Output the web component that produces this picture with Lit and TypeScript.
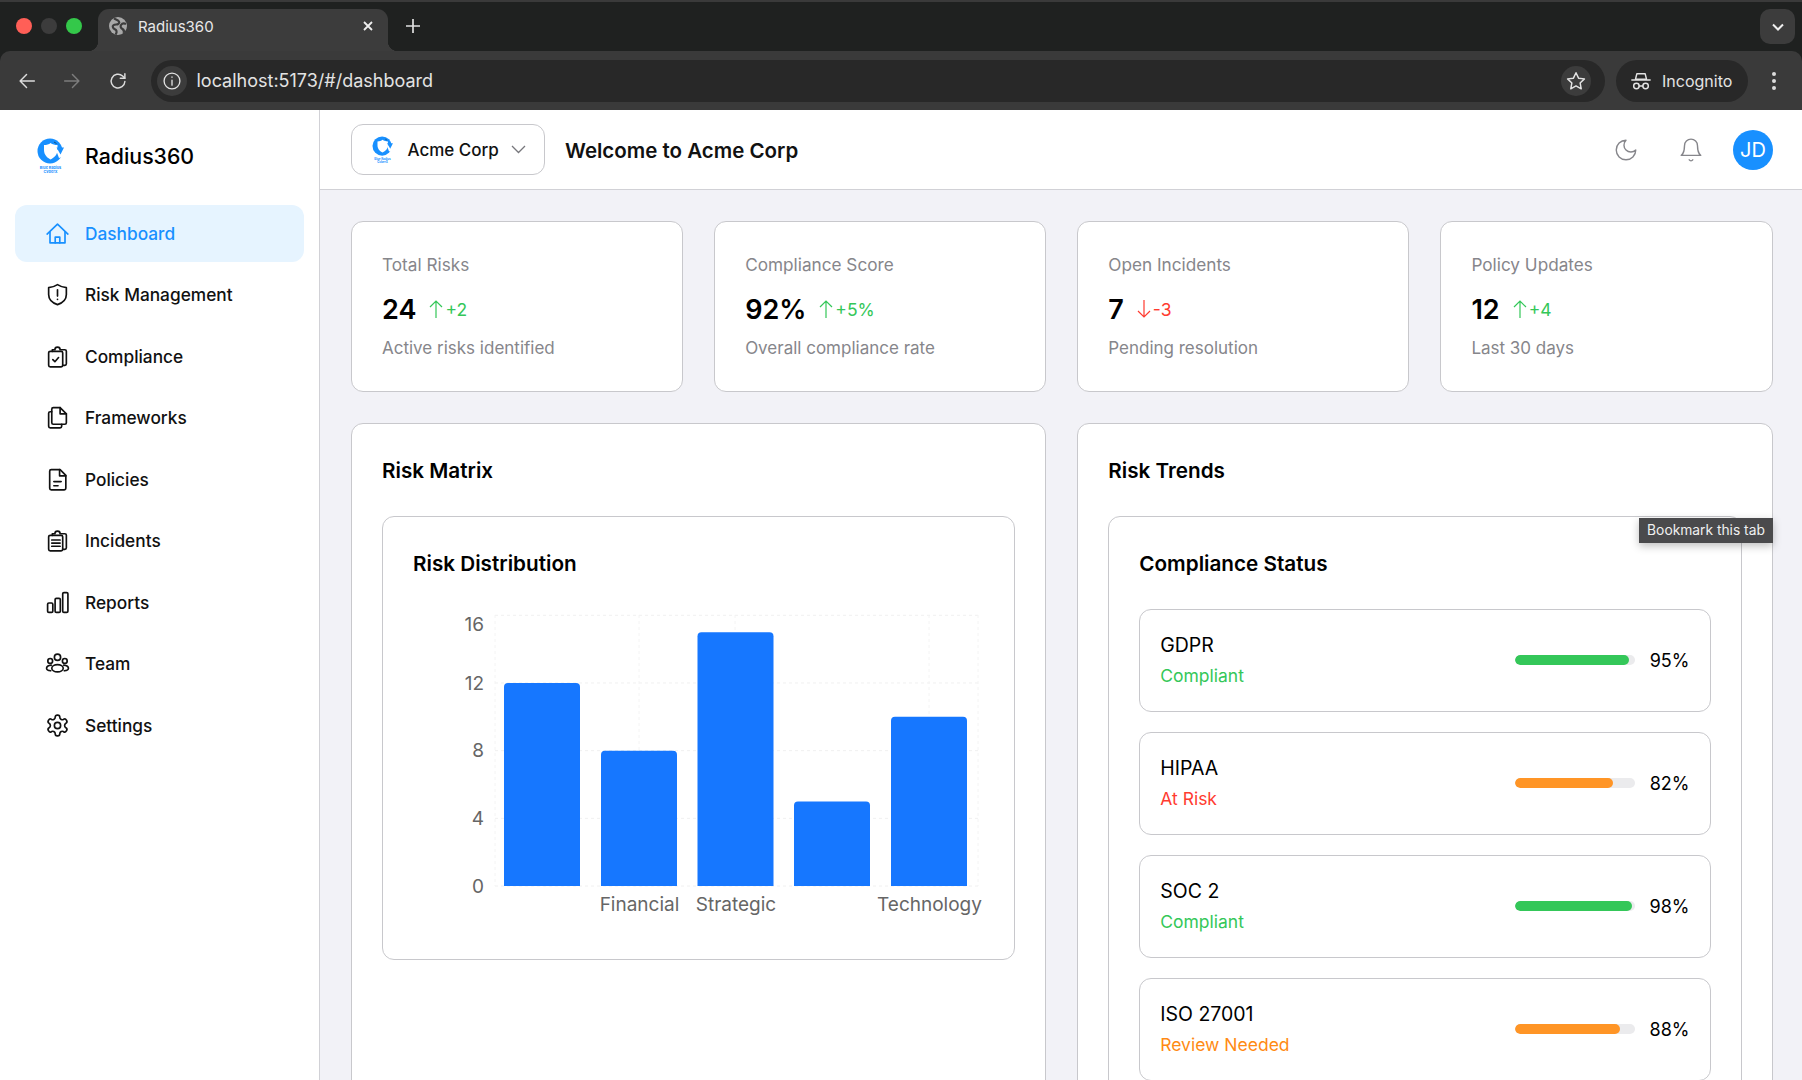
import { LitElement, html, svg, css } from 'lit';
import { customElement } from 'lit/decorators.js';

const ic = (body: unknown, size = 25, sw = 1.6) => html`<svg class="ic" width=${size} height=${size} viewBox="0 0 24 24" fill="none" stroke="currentColor" stroke-width=${sw} stroke-linecap="round" stroke-linejoin="round">${body}</svg>`;

const navItems = [
  { label: 'Dashboard', active: true, icon: svg`<path d="M2 12.500 12 3l10 9.500"/><path d="M4.800 10.500V21h14.400V10.500"/><path d="M9.800 21v-5.500h4.400V21"/>` },
  { label: 'Risk Management', icon: svg`<path d="M12 2.500c2.600 1.700 5.200 2.600 8.500 2.900V12c0 4.700-3.300 8-8.500 9.700C6.800 20 3.500 16.700 3.500 12V5.400C6.800 5.100 9.400 4.200 12 2.500z"/><path d="M12 7.500v6"/><path d="M12 16.600v.2"/>` },
  { label: 'Compliance', icon: svg`<rect x="3.500" y="7" width="13.500" height="15" rx="1.500"/><path d="M7 7V5.500h2.500a2.500 2.500 0 0 1 5 0H19a1.500 1.500 0 0 1 1.500 1.500v12a1.500 1.500 0 0 1-1.500 1.500h-2"/><path d="m7.500 15 2 2 3.500-4"/>` },
  { label: 'Frameworks', icon: svg`<path d="M8 2.500h6.500l6 6V17a1.500 1.500 0 0 1-1.500 1.500H8A1.500 1.500 0 0 1 6.500 17V4A1.500 1.500 0 0 1 8 2.500z"/><path d="M14.500 2.500v6h6"/><path d="M6.500 6.500H5A1.500 1.500 0 0 0 3.500 8v12.500A1.500 1.500 0 0 0 5 22h9.500a1.500 1.500 0 0 0 1.500-1.500v-2"/>` },
  { label: 'Policies', icon: svg`<path d="M6 2.500h8.500l5.500 5.500v12.500a1.500 1.500 0 0 1-1.500 1.500H6a1.500 1.500 0 0 1-1.500-1.500V4A1.500 1.500 0 0 1 6 2.500z"/><path d="M14 2.500V8.500h6"/><path d="M8.500 14h7"/><path d="M8.500 18h4"/>` },
  { label: 'Incidents', icon: svg`<rect x="3.500" y="7" width="13.500" height="15" rx="1.500"/><path d="M7 7V5.500h2.500a2.500 2.500 0 0 1 5 0H19a1.500 1.500 0 0 1 1.500 1.500v12a1.500 1.500 0 0 1-1.500 1.500h-2"/><path d="M6.500 11.500h8M6.500 14.500h8M6.500 17.500h8"/>` },
  { label: 'Reports', icon: svg`<rect x="2.500" y="12.500" width="5" height="9" rx="1.200"/><rect x="9.700" y="8" width="5" height="13.500" rx="1.200"/><rect x="17" y="2.500" width="5" height="19" rx="1.200"/>` },
  { label: 'Team', icon: svg`<circle cx="12" cy="6" r="3"/><circle cx="5" cy="9.500" r="2.300"/><circle cx="19" cy="9.500" r="2.300"/><ellipse cx="12" cy="16.500" rx="5.500" ry="3.500"/><path d="M6 13.500c-2.500.2-4.500 1.400-4.500 3 0 1.300 1.700 2.300 4 2.500"/><path d="M18 13.500c2.500.2 4.500 1.400 4.500 3 0 1.300-1.700 2.300-4 2.500"/>` },
  { label: 'Settings', icon: svg`<path d="M12.220 2h-.44a2 2 0 0 0-2 2v.18a2 2 0 0 1-1 1.730l-.43.25a2 2 0 0 1-2 0l-.15-.08a2 2 0 0 0-2.730.73l-.22.38a2 2 0 0 0 .73 2.730l.15.1a2 2 0 0 1 1 1.720v.51a2 2 0 0 1-1 1.740l-.15.09a2 2 0 0 0-.73 2.730l.22.38a2 2 0 0 0 2.730.73l.15-.08a2 2 0 0 1 2 0l.43.25a2 2 0 0 1 1 1.730V20a2 2 0 0 0 2 2h.44a2 2 0 0 0 2-2v-.18a2 2 0 0 1 1-1.730l.43-.25a2 2 0 0 1 2 0l.15.08a2 2 0 0 0 2.730-.73l.22-.39a2 2 0 0 0-.73-2.730l-.15-.08a2 2 0 0 1-1-1.740v-.5a2 2 0 0 1 1-1.740l.15-.09a2 2 0 0 0 .73-2.730l-.22-.38a2 2 0 0 0-2.730-.73l-.15.08a2 2 0 0 1-2 0l-.43-.25a2 2 0 0 1-1-1.730V4a2 2 0 0 0-2-2z"/><circle cx="12" cy="12" r="3"/>` },
];

const stats = [
  { label: 'Total Risks', value: '24', delta: '+2', up: true, sub: 'Active risks identified' },
  { label: 'Compliance Score', value: '92%', delta: '+5%', up: true, sub: 'Overall compliance rate' },
  { label: 'Open Incidents', value: '7', delta: '-3', up: false, sub: 'Pending resolution' },
  { label: 'Policy Updates', value: '12', delta: '+4', up: true, sub: 'Last 30 days' },
];

const frameworks = [
  { name: 'GDPR', status: 'Compliant', cls: 'green', pct: 95 },
  { name: 'HIPAA', status: 'At Risk', cls: 'red', pct: 82 },
  { name: 'SOC 2', status: 'Compliant', cls: 'green', pct: 98 },
  { name: 'ISO 27001', status: 'Review Needed', cls: 'orange', pct: 88 },
];

// chart geometry, local to the svg
const bars = [
  { x: 91, v: 12 }, { x: 188, v: 8 }, { x: 284.5, v: 15 }, { x: 381, v: 5 }, { x: 478, v: 10 },
];
const baseY = 277;
const perUnit = 16.92;

const logo = (w: number, h: number) => html`<svg class="logo" width=${w} height=${h} viewBox="0 0 54 70">
  <circle cx="26" cy="26" r="25" fill="#1890ff"/>
  <path d="M27 10c4 3 9 4 14 4v10c0 9-6 15-14 19-6-3-13-9-13-19V14c5 0 10-1 13-4z" fill="#fff"/>
  <path d="M38 24 54 24V37L44 40z" fill="#fff"/>
  <path d="M39 19h15l-7 14z" fill="#1890ff"/>
  <path d="M34 8l5 3" stroke="#16507c" stroke-width="2"/>
  <text x="27" y="61" text-anchor="middle" font-size="7.500" font-weight="700" fill="#1890ff">Blue Radius</text>
  <text x="27" y="69" text-anchor="middle" font-size="7.500" font-weight="700" fill="#1890ff">CyberX</text>
</svg>`;

@customElement('app-root')
export class AppRoot extends LitElement {
  static styles = css`
    :host {
      display: flex;
      flex-direction: column;
      position: relative;
      height: 1080px;
      overflow: hidden;
      font-family: Inter, "Liberation Sans", sans-serif;
      color: #000;
      background: #f2f2f7;
    }

    /* browser frame */
    .strip {
      flex: none;
      display: flex;
      background: #1f2120;
      border-top: 2px solid #3a3a3a;
      padding-top: 7px;
      height: 42px;
      color: #e8e8e8;
    }
    .lights { width: 98px; display: flex; align-items: center; padding: 0 0 8px 16px; gap: 9px; box-sizing: border-box; }
    .lights i { width: 16px; height: 16px; border-radius: 50%; background: #3c3c3c; }
    .lights i.r { background: #ff5f57; }
    .lights i.g { background: #34c84a; }
    .tab {
      position: relative;
      width: 290px;
      display: flex;
      align-items: center;
      padding: 0 14px 8px 10px;
      box-sizing: border-box;
      background: #3c3c3c;
      border-radius: 11px 11px 0 0;
      font-size: 15px;
    }
    .tab::before, .tab::after {
      content: "";
      position: absolute;
      bottom: 0;
      width: 10px;
      height: 10px;
    }
    .tab::before { left: -10px; background: radial-gradient(circle at 0 0, transparent 10px, #3c3c3c 10.500px); }
    .tab::after { right: -10px; background: radial-gradient(circle at 100% 0, transparent 10px, #3c3c3c 10.500px); }
    .tab .title { margin-left: 10px; flex: 1; }
    .plus { margin: 0 0 8px 13px; width: 24px; display: flex; align-items: center; justify-content: center; }
    .tab-menu {
      margin: 0 7px 7px auto;
      width: 35px;
      height: 35px;
      border-radius: 10px;
      background: #3c3c3c;
      display: flex;
      align-items: center;
      justify-content: center;
    }
    .toolbar-bg { background: #1f2120; flex: none; }
    .toolbar {
      height: 59px;
      display: flex;
      align-items: center;
      background: #3a3a3a;
      border-radius: 10px 10px 0 0;
      color: #dcdcdc;
      box-sizing: border-box;
    }
    .nav-btn { width: 45.500px; display: flex; justify-content: center; }
    .nav-btn.first { margin-left: 4px; }
    .nav-btn.dim { color: #7c7c7c; }
    .omni {
      margin-left: 10px;
      flex: 1;
      height: 42px;
      border-radius: 21px;
      background: #282828;
      display: flex;
      align-items: center;
      padding: 0 14px 0 6px;
      font-size: 18px;
      color: #e3e3e3;
    }
    .round { width: 30px; height: 30px; border-radius: 50%; background: #3c3c3c; display: flex; align-items: center; justify-content: center; flex: none; }
    .url { margin-left: 10px; flex: 1; }
    .incog {
      margin-left: 11px;
      width: 132px;
      height: 42px;
      border-radius: 21px;
      background: #282828;
      display: flex;
      align-items: center;
      padding-left: 14px;
      gap: 10px;
      box-sizing: border-box;
      font-size: 16px;
      color: #e3e3e3;
    }
    .kebab { width: 52px; margin-right: 2px; display: flex; justify-content: center; }
    .tooltip {
      position: absolute;
      left: 1639px;
      top: 518px;
      width: 134px;
      height: 25px;
      padding-bottom: 1px;
      box-sizing: border-box;
      background: #4a4a4c;
      color: #f0f0f0;
      font-size: 13.800px;
      display: flex;
      align-items: center;
      justify-content: center;
      box-shadow: 0 3px 8px rgba(0, 0, 0, .25);
    }

    /* page */
    .page { flex: 1; display: flex; min-height: 0; }
    .side {
      width: 320px;
      flex: none;
      box-sizing: border-box;
      background: #fff;
      border-right: 1px solid #d1d1d6;
      padding: 0 15px;
    }
    .brand { height: 95px; display: flex; align-items: center; padding-left: 22px; gap: 21px; font-size: 21.300px; font-weight: 500; }
    .brand .logo { margin-top: -5px; }
    .brand span { margin-top: -4px; }
    .nav { display: flex; flex-direction: column; gap: 4.470px; }
    .item {
      height: 57px;
      display: flex;
      align-items: center;
      gap: 15px;
      padding-left: 30px;
      border-radius: 12px;
      font-size: 17.300px;
      font-weight: 500;
      color: #111;
    }
    .item.active { background: #e6f4ff; color: #1890ff; }
    .right { flex: 1; min-width: 0; display: flex; flex-direction: column; }
    .head {
      height: 80px;
      flex: none;
      box-sizing: border-box;
      background: #fff;
      border-bottom: 1px solid #d1d1d6;
      display: flex;
      align-items: center;
      padding: 0 29px 0 31px;
      color: #86868b;
    }
    .org {
      width: 194px;
      height: 51px;
      box-sizing: border-box;
      border: 1px solid #c8c8cc;
      border-radius: 12px;
      display: flex;
      align-items: center;
      padding-left: 20px;
      gap: 14.500px;
      font-size: 17px;
      font-weight: 500;
      color: #111;
    }
    .org .chev { color: #77777c; margin-left: -2.500px; }
    .welcome { margin-left: 20px; margin-top: 1px; font-size: 20.500px; font-weight: 600; color: #111; flex: 1; }
    .bell { margin-left: 39px; display: flex; }
    .avatar {
      margin-left: 29px;
      width: 40px;
      height: 40px;
      border-radius: 50%;
      background: #1890ff;
      color: #fff;
      font-size: 20px;
      display: flex;
      align-items: center;
      justify-content: center;
    }
    .main { flex: 1; min-height: 0; overflow: hidden; padding: 31px 29.500px 0 31px; display: flex; flex-direction: column; gap: 31px; }
    .stats { display: grid; grid-template-columns: repeat(4, 1fr); gap: 31px; }
    .card { box-sizing: border-box; background: #fff; border: 1px solid #c8c8cc; border-radius: 12px; }
    .stat { height: 171px; padding: 31px 30px 0 30px; }
    .stat .lab { font-size: 17.200px; line-height: 24px; color: #86868b; }
    .stat .row { margin-top: 13px; display: flex; align-items: center; height: 38px; }
    .stat .val { font-size: 27px; font-weight: 600; margin-right: 12px; }
    .delta { display: flex; align-items: center; font-size: 17.500px; }
    .delta svg { margin-right: 1px; }
    .stat .sub { margin-top: 8px; font-size: 17px; line-height: 24px; color: #86868b; }
    .green { color: #34c759; }
    .red { color: #ff3b30; }
    .orange { color: #ff8a14; }
    .cols { display: grid; grid-template-columns: 1fr 1fr; gap: 31px; align-items: start; flex: 1; }
    .panel { padding: 31px 30px 30px; min-height: 700px; }
    h2, h3 { margin: 0 0 29px; height: 32px; line-height: 32px; font-size: 20.700px; font-weight: 600; }
    .inner { padding: 31px 30px 30px; }
    .inner.chart { height: 444px; }
    .chart svg { display: block; font-family: Inter, "Liberation Sans", sans-serif; }
    .list { display: flex; flex-direction: column; gap: 20.300px; }
    .fw {
      height: 102.700px;
      box-sizing: border-box;
      border: 1px solid #c8c8cc;
      border-radius: 12px;
      padding: 0 20px 0 20px;
      display: flex;
      align-items: center;
    }
    .fw .name { font-size: 19.500px; line-height: 26px; }
    .fw .status { font-size: 17.500px; line-height: 24px; margin-top: 6px; }
    .fw .meta { flex: 1; }
    .track { width: 120px; height: 10px; border-radius: 5px; background: #ebebed; overflow: hidden; margin-right: 15px; }
    .fill { height: 100%; border-radius: 5px; }
    .fill.green { background: #34c759; }
    .fill.orange, .fill.red { background: #ff9526; }
    .pct { font-size: 18px; width: 40px; text-align: right; }
  `;

  renderChart() {
    const ys = [0, 4, 8, 12, 16];
    return svg`
      ${ys.map((v) => svg`<line x1="82" x2="565" y1=${baseY - v * perUnit} y2=${baseY - v * perUnit} stroke="#f0f0f0" stroke-dasharray="3 3"/>`)}
      ${[82, 226, 322, 516, 565].map((x) => svg`<line x1=${x} x2=${x} y1="6" y2=${baseY} stroke="#f4f4f4" stroke-dasharray="3 3"/>`)}
      ${bars.map((b) => svg`<path d=${`M${b.x} ${baseY}V${baseY - b.v * perUnit + 4}a4 4 0 0 1 4-4h68a4 4 0 0 1 4 4V${baseY}z`} fill="#1677ff"/>`)}
      <g font-size="19" fill="#666" text-anchor="end">
        <text x="71" y="22">16</text>
        <text x="71" y="81">12</text>
        <text x="71" y="148">8</text>
        <text x="71" y="216">4</text>
        <text x="71" y="284">0</text>
      </g>
      <g font-size="19" fill="#666" text-anchor="middle">
        <text x="226.500" y="302">Financial</text>
        <text x="323" y="302">Strategic</text>
        <text x="516.500" y="302">Technology</text>
      </g>`;
  }

  render() {
    return html`
      <div class="strip">
        <div class="lights"><i class="r"></i><i></i><i class="g"></i></div>
        <div class="tab">
          <svg width="20" height="20" viewBox="0 0 20 20"><circle cx="10" cy="10" r="9" fill="#a8a8a8"/><path d="M6 2.500c2 1 4 1.500 5 3s-1 3-3 3-4 1-3 3 3 1.500 3.500 3.500-.5 3-1 3.500M18 8c-2-1-4-.5-5 1s0 3 1.500 4 1.500 3 1 4" fill="none" stroke="#3c3c3c" stroke-width="2.200"/></svg>
          <span class="title">Radius360</span>
          <svg width="12" height="12" viewBox="0 0 12 12" stroke="#eee" stroke-width="1.800"><path d="M2 2l8 8M10 2l-8 8"/></svg>
        </div>
        <div class="plus"><svg width="14" height="14" viewBox="0 0 14 14" stroke="#e0e0e0" stroke-width="1.700"><path d="M7 0v14M0 7h14"/></svg></div>
        <div class="tab-menu"><svg width="12" height="8" viewBox="0 0 12 8" fill="none" stroke="#eee" stroke-width="2"><path d="M1 1.500l5 5 5-5"/></svg></div>
      </div>
      <div class="toolbar-bg"><div class="toolbar">
        <div class="nav-btn first">${ic(svg`<path d="M20 12H5M11.500 5 4.500 12l7 7"/>`, 22)}</div>
        <div class="nav-btn dim">${ic(svg`<path d="M4 12h15M12.500 5l7 7-7 7"/>`, 22)}</div>
        <div class="nav-btn">${ic(svg`<path d="M19.500 12.500A7.500 7.500 0 1 1 17 6.500L19.500 9"/><path d="M19.500 4v5h-5"/>`, 22)}</div>
        <div class="omni">
          <div class="round">${ic(svg`<circle cx="12" cy="12" r="9.500"/><path d="M12 11v6M12 7.200v.3"/>`, 20)}</div>
          <span class="url">localhost:5173/#/dashboard</span>
          <div class="round">${ic(svg`<path d="m12 3 2.800 5.900 6.400.8-4.700 4.400 1.200 6.400L12 17.400l-5.700 3.100 1.200-6.400-4.700-4.400 6.400-.8z"/>`, 22)}</div>
        </div>
        <div class="incog">
          ${ic(svg`<path d="M7.500 4h9l1.500 6H6z"/><path d="M2 11h20"/><circle cx="7" cy="17.500" r="3"/><circle cx="17" cy="17.500" r="3"/><path d="M10 17.500h4"/>`, 22)}
          <span>Incognito</span>
        </div>
        <div class="kebab"><svg width="6" height="20" viewBox="0 0 6 20" fill="#dcdcdc"><circle cx="3" cy="3" r="2"/><circle cx="3" cy="10" r="2"/><circle cx="3" cy="17" r="2"/></svg></div>
      </div></div>

      <div class="page">
        <aside class="side">
          <div class="brand">${logo(27, 35)}<span>Radius360</span></div>
          <div class="nav">
            ${navItems.map((n) => html`<div class="item ${n.active ? 'active' : ''}">${ic(n.icon)}<span>${n.label}</span></div>`)}
          </div>
        </aside>
        <div class="right">
          <header class="head">
            <div class="org">
              ${logo(21, 27)}
              <span>Acme Corp</span>
              <svg class="chev" width="15" height="9" viewBox="0 0 15 9" fill="none" stroke="currentColor" stroke-width="1.300"><path d="M1 1l6.500 6.500L14 1"/></svg>
            </div>
            <div class="welcome">Welcome to Acme Corp</div>
            ${ic(svg`<path d="M12 3a6 6 0 0 0 9 9 9 9 0 1 1-9-9Z"/>`, 26, 1.3)}
            <div class="bell">${ic(svg`<path d="M6 8a6 6 0 0 1 12 0c0 7 3 9 3 9H3s3-2 3-9"/><path d="M10.300 21a1.940 1.940 0 0 0 3.400 0"/>`, 26, 1.3)}</div>
            <div class="avatar">JD</div>
          </header>
          <main class="main">
            <section class="stats">
              ${stats.map((s) => html`
                <div class="card stat">
                  <div class="lab">${s.label}</div>
                  <div class="row">
                    <span class="val">${s.value}</span>
                    <span class="delta ${s.up ? 'green' : 'red'}">
                      <svg width="16" height="20" viewBox="0 0 16 20" fill="none" stroke="currentColor" stroke-width="1.200">
                        ${s.up ? svg`<path d="M8 19V2M2 8l6-6 6 6"/>` : svg`<path d="M8 1v17M2 12l6 6 6-6"/>`}
                      </svg>${s.delta}
                    </span>
                  </div>
                  <div class="sub">${s.sub}</div>
                </div>`)}
            </section>
            <section class="cols">
              <div class="card panel">
                <h2>Risk Matrix</h2>
                <div class="card inner chart">
                  <h3>Risk Distribution</h3>
                  <svg width="570" height="320" viewBox="0 0 570 320">${this.renderChart()}</svg>
                </div>
              </div>
              <div class="card panel">
                <h2>Risk Trends</h2>
                <div class="card inner">
                  <h3>Compliance Status</h3>
                  <div class="list">
                    ${frameworks.map((f) => html`
                      <div class="fw">
                        <div class="meta">
                          <div class="name">${f.name}</div>
                          <div class="status ${f.cls}">${f.status}</div>
                        </div>
                        <div class="track"><div class="fill ${f.cls}" style="width:${f.pct}%"></div></div>
                        <div class="pct">${f.pct}%</div>
                      </div>`)}
                  </div>
                </div>
              </div>
            </section>
          </main>
        </div>
      </div>
      <div class="tooltip">Bookmark this tab</div>
    `;
  }
}
